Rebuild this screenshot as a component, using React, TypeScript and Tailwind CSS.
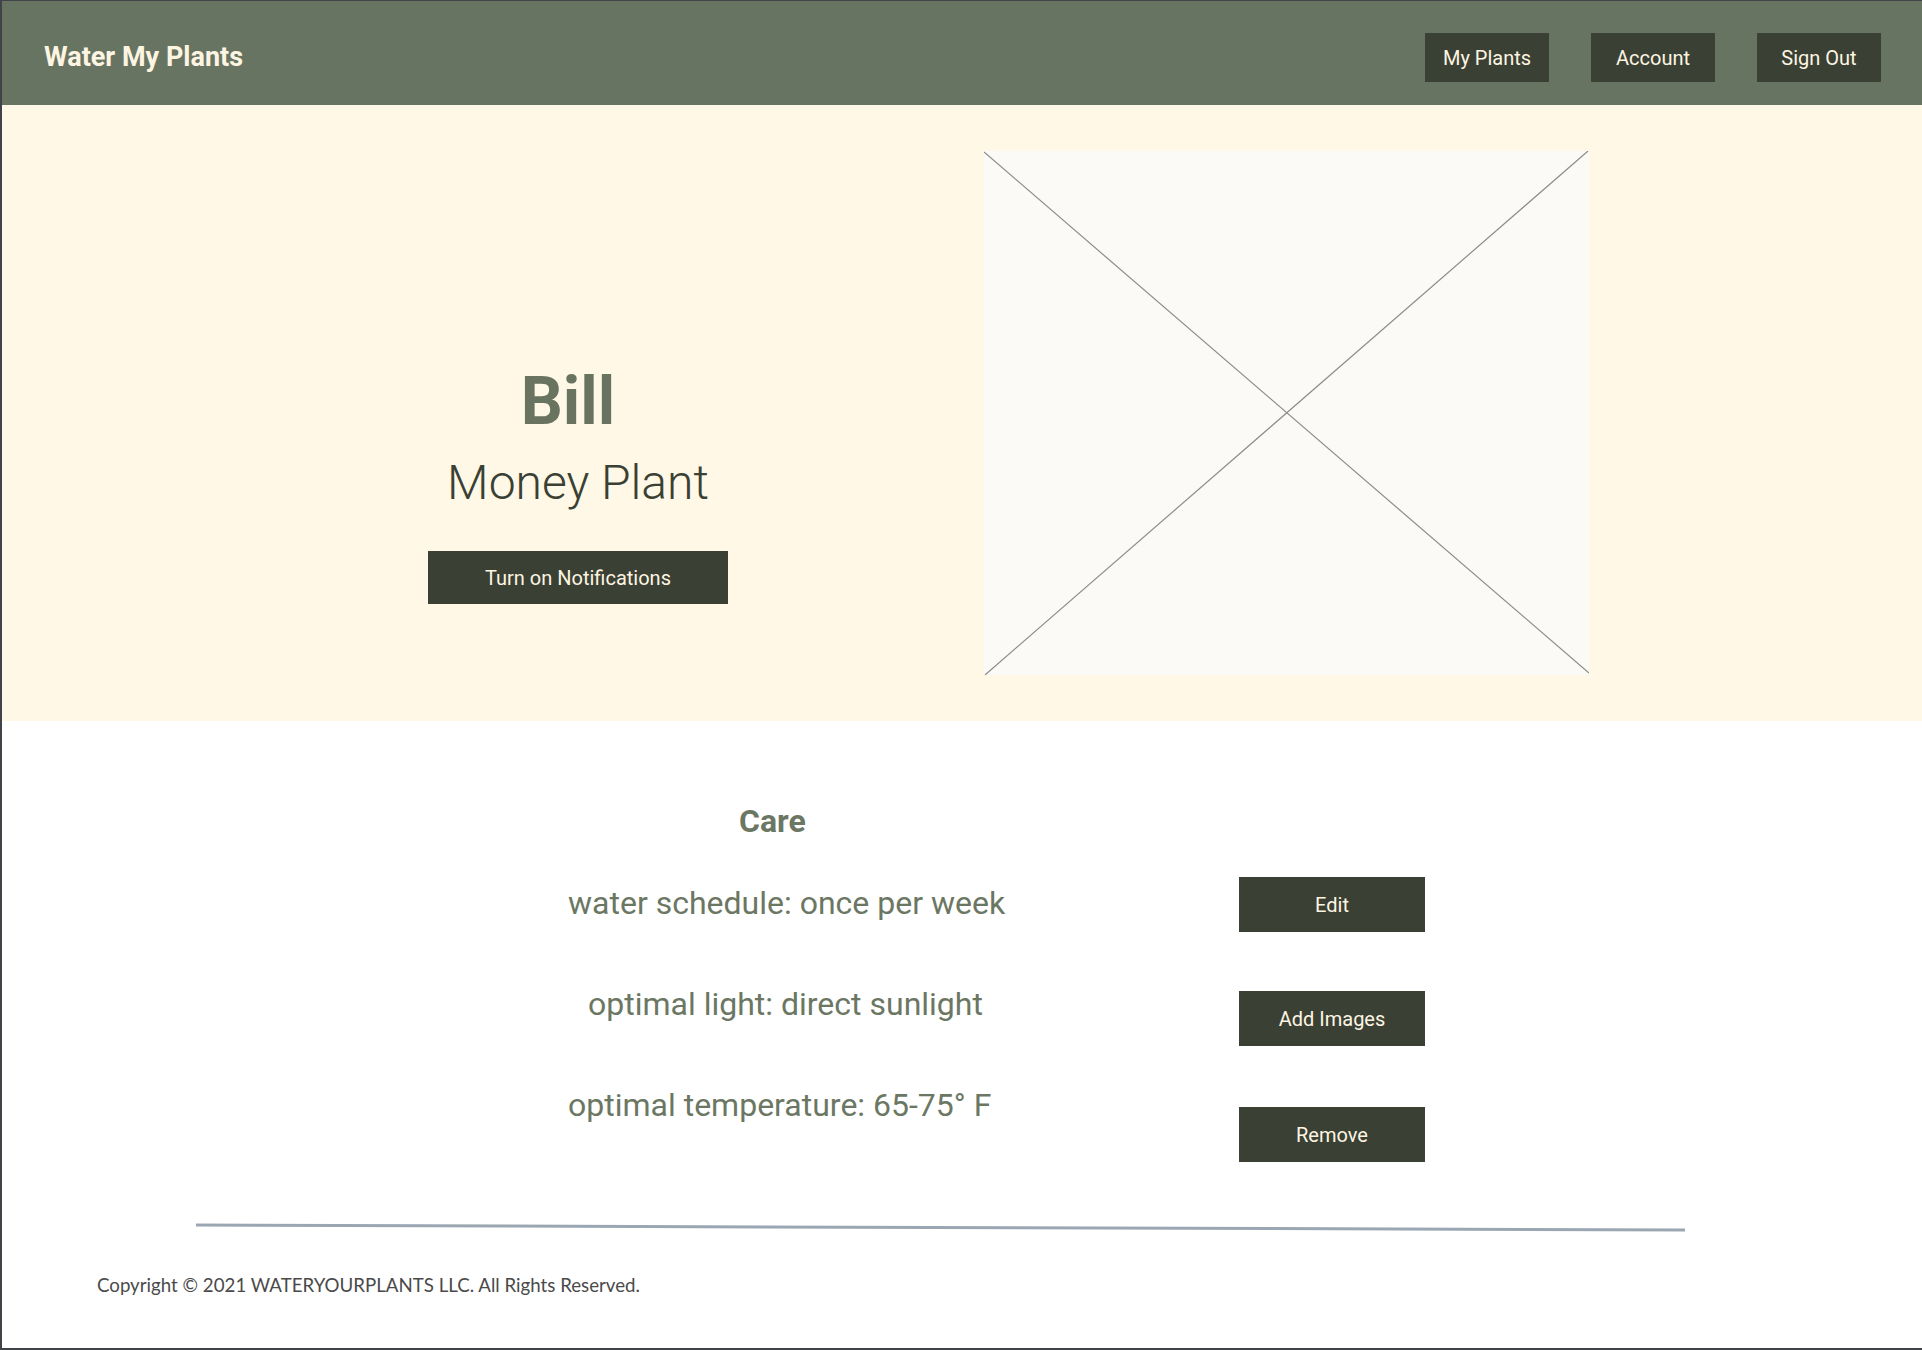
import React from 'react'

const navItems = ['My Plants', 'Account', 'Sign Out']

const careItems = [
  { text: 'water schedule: once per week', indent: '' },
  { text: 'optimal light: direct sunlight', indent: 'pl-[20px]' },
  { text: 'optimal temperature: 65-75° F', indent: '' },
]

const Header = () => (
  <header className="flex h-[104px] items-start justify-between bg-[#687462] pl-[42px] pr-[41px]">
    <div className="pt-[40px] font-['Roboto',sans-serif] text-[27px] font-bold leading-[32px] text-[#fdf5e2]">
      Water My Plants
    </div>
    <nav className="flex gap-[42px] pt-[32px]">
      {navItems.map((label) => (
        <button
          key={label}
          className="flex h-[49px] w-[124px] items-center justify-center bg-[#3a4034] font-['Roboto',sans-serif] text-[20px] text-[#fdf5e2]"
        >
          {label}
        </button>
      ))}
    </nav>
  </header>
)

const ImagePlaceholder = () => (
  <div className="h-[524px] w-[605px] bg-[#fbfaf6]">
    <svg width="605" height="524" viewBox="0 0 605 524">
      <line x1="0" y1="1" x2="605" y2="522" stroke="#8c8c8c" strokeWidth="1.2" />
      <line x1="1" y1="524" x2="604" y2="0" stroke="#8c8c8c" strokeWidth="1.2" />
    </svg>
  </div>
)

const Hero = () => (
  <section className="grid h-[616px] grid-cols-[708px_605px] gap-[52px] bg-[#fff8e6] pl-[222px]">
    <div className="flex flex-col items-center pt-[257px] font-['Roboto',sans-serif]">
      <h1 className="mr-[20px] text-[66px] font-bold leading-[80px] text-[#687460]">Bill</h1>
      <h2 className="mt-[11px] text-[48px] font-light leading-[60px] text-[#3a4033]">Money Plant</h2>
      <button className="mt-[38px] flex h-[53px] w-[300px] items-center justify-center bg-[#3a4034] text-[20px] text-[#fdf5e2]">
        Turn on Notifications
      </button>
    </div>
    <div className="pt-[46px]">
      <ImagePlaceholder />
    </div>
  </section>
)

const Care = () => (
  <section className="flex items-start font-['Roboto',sans-serif]">
    <div className="ml-[566px] flex w-[466px] flex-col pt-[82px] text-[#6b7763]">
      <h3 className="ml-[171px] text-[32px] font-bold leading-[36px]">Care</h3>
      <div className="mt-[44px] flex flex-col gap-[61px]">
        {careItems.map((item) => (
          <p key={item.text} className={`text-[32px] leading-[40px] ${item.indent}`}>
            {item.text}
          </p>
        ))}
      </div>
    </div>
    <div className="ml-[205px] flex flex-col pt-[156px]">
      <button className="flex h-[55px] w-[186px] items-center justify-center bg-[#3a4034] text-[20px] text-[#fdf5e2]">
        Edit
      </button>
      <button className="mt-[59px] flex h-[55px] w-[186px] items-center justify-center bg-[#3a4034] text-[20px] text-[#fdf5e2]">
        Add Images
      </button>
      <button className="mt-[61px] flex h-[55px] w-[186px] items-center justify-center bg-[#3a4034] text-[20px] text-[#fdf5e2]">
        Remove
      </button>
    </div>
  </section>
)

export default function App() {
  return (
    <div className="flex h-[1350px] w-[1922px] flex-col overflow-hidden border-t border-b-2 border-l-2 border-[#404348] bg-white">
      <Header />
      <Hero />
      <Care />
      <div className="ml-[194px] mt-[64px] h-[3px] w-[1489px] rotate-[0.19deg] bg-[#9aa6b2]" />
      <footer className="mt-[44px] pl-[95px] font-['Lato',sans-serif] text-[18.7px] leading-[24px] text-[#4a4a4a]">
        Copyright © 2021 WATERYOURPLANTS LLC. All Rights Reserved.
      </footer>
    </div>
  )
}
